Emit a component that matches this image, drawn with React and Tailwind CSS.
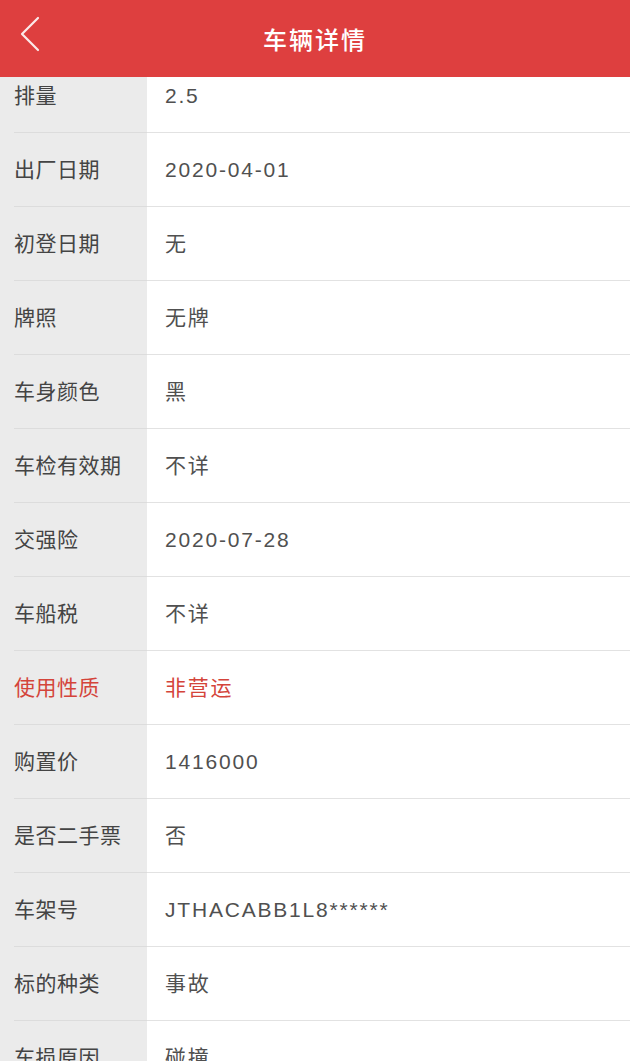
import React from 'react';

const rows = [
  { label: '排量', value: '2.5' },
  { label: '出厂日期', value: '2020-04-01' },
  { label: '初登日期', value: '无' },
  { label: '牌照', value: '无牌' },
  { label: '车身颜色', value: '黑' },
  { label: '车检有效期', value: '不详' },
  { label: '交强险', value: '2020-07-28' },
  { label: '车船税', value: '不详' },
  { label: '使用性质', value: '非营运', highlight: true },
  { label: '购置价', value: '1416000' },
  { label: '是否二手票', value: '否' },
  { label: '车架号', value: 'JTHACABB1L8******' },
  { label: '标的种类', value: '事故' },
  { label: '车损原因', value: '碰撞' },
];

const font = { fontFamily: '"Liberation Sans", "Noto Sans CJK SC", sans-serif' };

const App = () => {
  return (
    <div className="w-[630px] h-[1061px] overflow-hidden bg-white flex flex-col" style={font}>
      {/* Header */}
      <header className="relative z-10 h-[77px] shrink-0 bg-[#de3f3f] flex items-center justify-center pt-[4px]">
        <button className="absolute left-[16px] top-[14px] w-[28px] h-[40px] flex items-center justify-center">
          <svg width="24" height="38" viewBox="0 0 24 38" fill="none">
            <path d="M20 3 L4 19 L20 35" stroke="#fbeaea" strokeWidth="2.2" strokeLinecap="round" strokeLinejoin="round" />
          </svg>
        </button>
        <h1 className="text-white text-[24px] font-medium tracking-[2px]">车辆详情</h1>
      </header>

      {/* Detail list, scrolled */}
      <div className="flex-1 overflow-hidden">
        <div className="-mt-[18px] flex flex-col">
          {rows.map((row, i) => (
            <div key={i} className="flex h-[74px]">
              <div className="w-[147px] shrink-0 bg-[#ebebeb] pl-[14px] flex flex-col">
                <div className="flex-1 flex items-center">
                  <span className={`text-[21px] tracking-[0.5px] ${row.highlight ? 'text-[#d4443a]' : 'text-[#444444]'}`}>
                    {row.label}
                  </span>
                </div>
                <div className="h-px bg-[#dcdcdc]" />
              </div>
              <div className="flex-1 flex flex-col">
                <div className="flex-1 flex items-center pl-[18px]">
                  <span className={`text-[21px] tracking-[1.8px] ${row.highlight ? 'text-[#d4443a]' : 'text-[#505050]'}`}>
                    {row.value}
                  </span>
                </div>
                <div className="h-px bg-[#e2e2e2]" />
              </div>
            </div>
          ))}
        </div>
      </div>
    </div>
  );
};

export default App;
